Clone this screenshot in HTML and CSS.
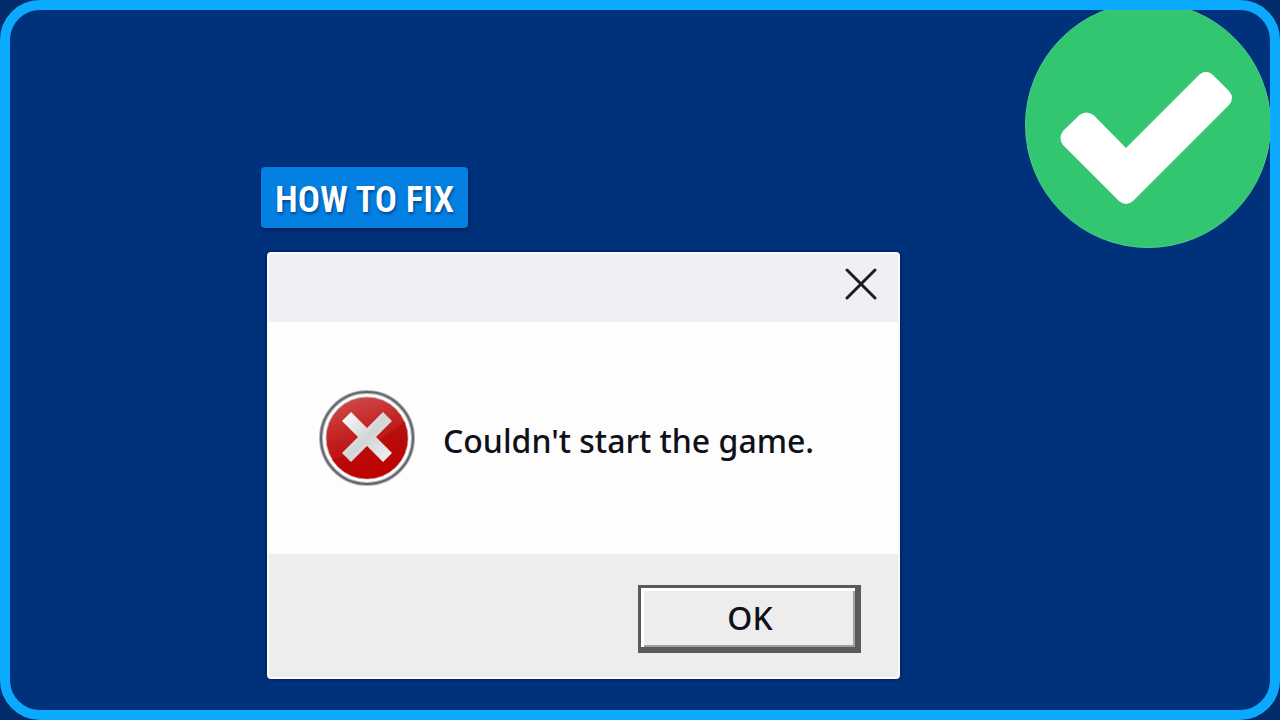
FILE: index.html
```
<!DOCTYPE html>
<html lang="en">
<head>
<meta charset="UTF-8">
<title>How to fix: Couldn't start the game</title>
<link rel="stylesheet" href="styles.css">
</head>
<body>

<main class="frame">
    <svg class="check" viewBox="0 0 246 246" aria-hidden="true">
        <circle cx="123" cy="123" r="122.5" fill="#32c671" stroke="#4fcb8c"/>
        <path d="M101 146L174.500 72.500Q181 67 187.500 72.500L204 89Q210 96 204 103L108 199Q101 205 94 199L38 143Q33 136 38 129L54.500 113Q61 108 68.500 113Z" fill="#fff"/>
    </svg>

    <h1 class="tag">HOW TO FIX</h1>

    <div class="dialog" role="alertdialog" aria-describedby="message">
        <div class="titlebar">
            <button type="button" class="close" aria-label="Close">
                <svg width="32" height="32" viewBox="0 0 32 32">
                    <path d="M2 2L30 30M30 2L2 30" stroke="#1c1c20" stroke-width="3" stroke-linecap="round"/>
                </svg>
            </button>
        </div>
        <div class="content">
            <svg class="error" width="96" height="96" viewBox="0 0 96 96" aria-hidden="true">
                <defs>
                    <linearGradient id="red" x1="0.3" y1="0" x2="0.6" y2="1">
                        <stop offset="0" stop-color="#cf4a4a"/>
                        <stop offset="0.5" stop-color="#c01a1a"/>
                        <stop offset="1" stop-color="#d00000"/>
                    </linearGradient>
                    <linearGradient id="silver" x1="0" y1="0" x2="1" y2="1">
                        <stop offset="0" stop-color="#fff"/>
                        <stop offset="0.5" stop-color="#d2d4d6"/>
                        <stop offset="1" stop-color="#f2f2f2"/>
                    </linearGradient>
                    <clipPath id="disc"><circle cx="48" cy="48" r="41"/></clipPath>
                </defs>
                <circle cx="48" cy="48" r="46" fill="#fff" stroke="#b4b8bb" stroke-width="4"/>
                <circle cx="48" cy="48" r="46" fill="none" stroke="#62666a" stroke-width="2"/>
                <circle cx="48" cy="48" r="41" fill="url(#red)" stroke="#c9a5a5" stroke-width="1"/>
                <path d="M0 72C30 68 60 54 90 28V96H0Z" fill="#a80000" opacity="0.4" clip-path="url(#disc)"/>
                <path d="M23 31L32 22L48 38L64 22L73 31L57 47L73 63L64 72L48 56L32 72L23 63L39 47Z" fill="url(#silver)"/>
            </svg>
            <p id="message">Couldn't start the game.</p>
        </div>
        <div class="footer">
            <button type="button" class="ok">OK</button>
        </div>
    </div>
</main>

</body>
</html>
```

FILE: styles.css
```
* {
    box-sizing: border-box;
}
body {
    margin: 0;
    background: #002c6c;
    font-family: "Noto Sans", sans-serif;
}
.frame {
    position: relative;
    display: flex;
    flex-direction: column;
    align-items: flex-start;
    min-height: 100vh;
    padding: 157px 24px 30px 251px;
    border: 10px solid #0caaff;
    border-radius: 40px;
    background: #00327c;
    overflow: hidden;
}
.check {
    position: absolute;
    top: -8px;
    right: -1px;
    width: 246px;
    height: 246px;
}
.tag {
    margin: 0 0 24px;
    padding: 4px 14px 0;
    border-radius: 4px;
    background: #0480e2;
    box-shadow: 1px 2px 4px rgba(0, 0, 40, 0.5);
    color: #fff;
    font-family: "Roboto Condensed", "Liberation Sans Narrow", Roboto, sans-serif;
    font-size: 37px;
    font-weight: 600;
    line-height: 57px;
    text-shadow: 1px 2px 3px rgba(0, 30, 90, 0.6);
    white-space: nowrap;
}
.dialog {
    width: 100%;
    max-width: 633px;
    margin-left: 6px;
    border: 2px solid #fafafc;
    border-radius: 4px;
    background: #fdfdfd;
    box-shadow: 0 0 4px rgba(0, 0, 50, 0.6);
    overflow: hidden;
}
.titlebar {
    display: flex;
    justify-content: flex-end;
    height: 68px;
    padding: 14px 21px;
    background: #eff0f6;
}
.close {
    width: 32px;
    height: 32px;
    padding: 0;
    border: 0;
    background: none;
}
.content {
    display: flex;
    align-items: center;
    gap: 28px;
    height: 232px;
    padding: 0 50px;
}
#message {
    margin: 0;
    padding-top: 6px;
    color: #101018;
    font-size: 32px;
    font-weight: 500;
    line-height: 44px;
}
.footer {
    display: flex;
    justify-content: flex-end;
    padding: 31px 37px 24px;
    background: #ededed;
}
.ok {
    width: 223px;
    height: 68px;
    padding: 0 0 0 4px;
    border: solid #5a5a5a;
    border-width: 3px 6px 6px 3px;
    background: #ededed;
    box-shadow: inset 3px 3px #fff, inset -2px -2px #a0a0a0;
    color: #101018;
    font-family: inherit;
    font-size: 32px;
    font-weight: 500;
}
```
